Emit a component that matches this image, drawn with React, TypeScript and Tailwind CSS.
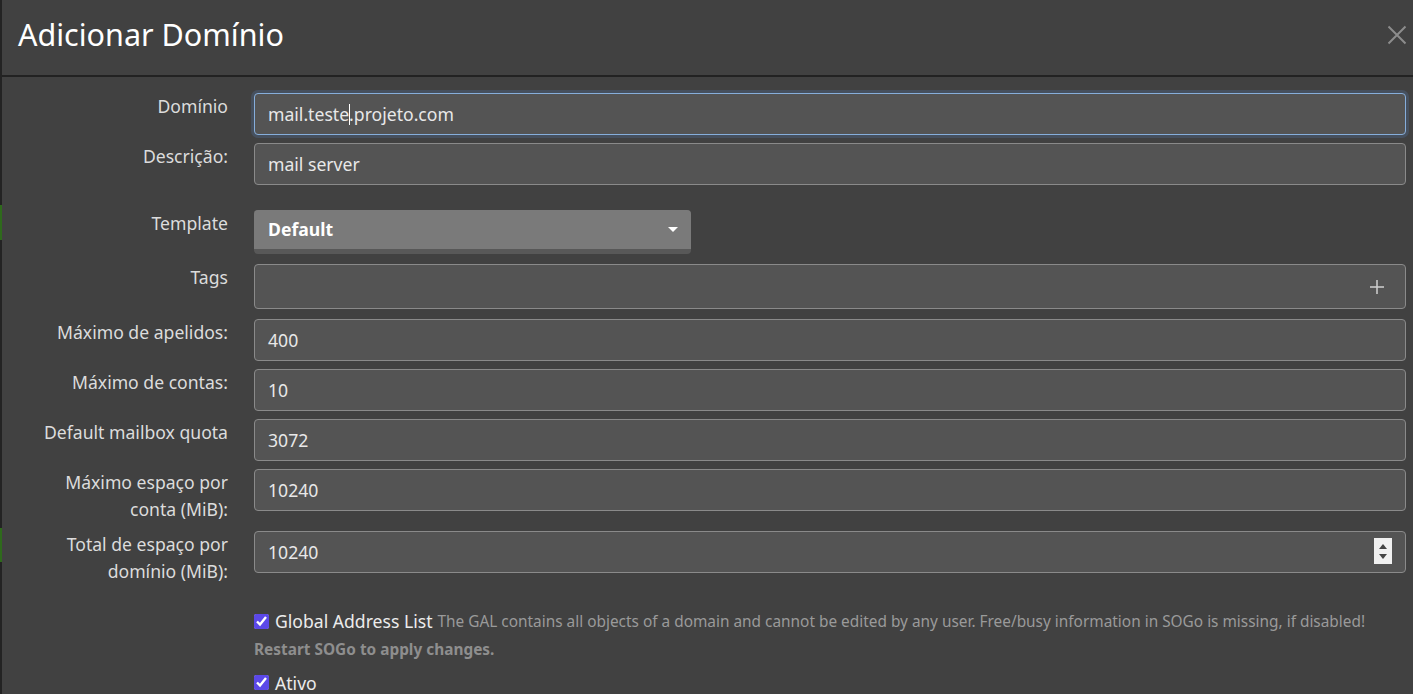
import React from "react";

const font = { fontFamily: '"Noto Sans", "Open Sans", sans-serif' };

function Field({ label, children, rowClass = "" }: { label: React.ReactNode; children: React.ReactNode; rowClass?: string }) {
  return (
    <div className={`grid shrink-0 grid-cols-[226px_1fr] gap-x-[26px] ${rowClass}`}>
      <div className="text-right text-[17.6px] leading-[27px] text-[#dcdcdc]">{label}</div>
      <div>{children}</div>
    </div>
  );
}

function TextBox({ value, extra }: { value?: React.ReactNode; extra?: React.ReactNode }) {
  return (
    <div className="relative flex h-[42px] items-center rounded-[4px] border border-[#8a8a8a] bg-[#545454] px-[13px] text-[17.6px] text-[#e8e8e8]">
      {value}
      {extra}
    </div>
  );
}

export default function App() {
  return (
    <div style={font} className="flex h-[694px] w-[1413px] overflow-hidden bg-[#414141]">
      <div className="flex w-[2px] shrink-0 flex-col bg-[#232323]">
        <div className="h-[205px] shrink-0" />
        <div className="h-[35px] shrink-0 bg-[#2f6a1c]" />
        <div className="h-[288px] shrink-0" />
        <div className="h-[34px] shrink-0 bg-[#2f6a1c]" />
      </div>
      <div className="flex flex-1 flex-col">
        <div className="flex h-[77px] shrink-0 items-center justify-between border-b-2 border-[#222] pl-[16px] pr-[6px]">
          <h1 className="mt-[-7px] text-[30.5px] font-normal leading-none text-white">Adicionar Domínio</h1>
          <svg width="20" height="20" viewBox="0 0 20 20" className="mt-[-6px]">
            <path d="M1.5 1.5 L18.5 18.5 M18.5 1.5 L1.5 18.5" stroke="#8c8c8c" strokeWidth="2" />
          </svg>
        </div>
        <div className="flex flex-col pr-[7px] pt-[16px]">
          <Field label="Domínio" rowClass="mb-[8px]">
            <div className="flex h-[42px] items-center rounded-[4px] border border-[#86aedb] bg-[#545454] px-[13px] text-[17.6px] text-[#e8e8e8] shadow-[0_0_0_3px_rgba(80,110,150,0.35)]">
              <span>mail.teste</span>
              <span className="-mr-px inline-block h-[21px] w-px bg-white" />
              <span>.projeto.com</span>
            </div>
          </Field>
          <Field label="Descrição:" rowClass="mb-[25px]">
            <TextBox value="mail server" />
          </Field>
          <Field label="Template" rowClass="mb-[10px]">
            <div className="flex h-[44px] w-[437px] flex-col overflow-hidden rounded-[4px] bg-[#585858]">
              <div className="flex h-[39px] items-center justify-between bg-[#7a7a7a] pl-[14px] pr-[13px]">
                <span className="text-[17.6px] font-bold text-white">Default</span>
                <svg width="10" height="6" viewBox="0 0 10 6">
                  <path d="M0 0 L10 0 L5 5 Z" fill="#fff" />
                </svg>
              </div>
            </div>
          </Field>
          <Field label="Tags" rowClass="mb-[10px]">
            <div className="flex h-[45px] items-center justify-end rounded-[4px] border border-[#8a8a8a] bg-[#545454] pr-[21px]">
              <svg width="14" height="14" viewBox="0 0 14 14">
                <path d="M7 0 V14 M0 7 H14" stroke="#cfcfcf" strokeWidth="1.5" />
              </svg>
            </div>
          </Field>
          <Field label="Máximo de apelidos:" rowClass="mb-[8px]">
            <TextBox value="400" />
          </Field>
          <Field label="Máximo de contas:" rowClass="mb-[8px]">
            <TextBox value="10" />
          </Field>
          <Field label="Default mailbox quota" rowClass="mb-[8px]">
            <TextBox value="3072" />
          </Field>
          <Field label={<>Máximo espaço por<br />conta (MiB):</>} rowClass="mb-[8px]">
            <TextBox value="10240" />
          </Field>
          <Field label={<>Total de espaço por<br />domínio (MiB):</>} rowClass="mb-[23px]">
            <TextBox
              value="10240"
              extra={
                <div className="absolute right-[13px] top-[6px] flex h-[26px] w-[18px] flex-col items-center justify-center gap-[5px] bg-[#f0f0f0]">
                  <svg width="8" height="5" viewBox="0 0 8 5">
                    <path d="M0 5 L4 0 L8 5 Z" fill="#444" />
                  </svg>
                  <svg width="8" height="5" viewBox="0 0 8 5">
                    <path d="M0 0 L8 0 L4 5 Z" fill="#444" />
                  </svg>
                </div>
              }
            />
          </Field>
          <div className="shrink-0 pl-[252px]">
            <div className="flex items-center whitespace-nowrap">
              <input type="checkbox" defaultChecked className="m-0 h-[15px] w-[15px] accent-[#5b48e8]" />
              <span className="ml-[6px] text-[17.6px] text-[#ececec]">Global Address List</span>
              <span className="ml-[5px] text-[15.4px] text-[#9a9a9a]">
                The GAL contains all objects of a domain and cannot be edited by any user. Free/busy information in SOGo is missing, if disabled!
              </span>
            </div>
            <div className="mt-[4px] text-[15.4px] font-bold text-[#8e8e8e]">Restart SOGo to apply changes.</div>
            <div className="mt-[8px] flex items-center">
              <input type="checkbox" defaultChecked className="m-0 h-[15px] w-[15px] accent-[#5b48e8]" />
              <span className="ml-[6px] text-[17.6px] text-[#ececec]">Ativo</span>
            </div>
          </div>
        </div>
      </div>
    </div>
  );
}
